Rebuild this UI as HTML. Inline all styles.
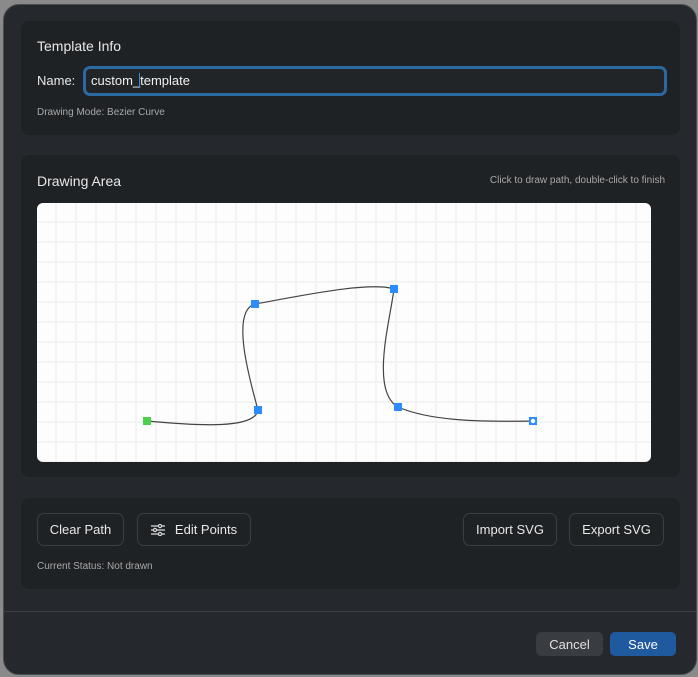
<!DOCTYPE html>
<html><head><style>
*{box-sizing:border-box;margin:0;padding:0}
body{width:698px;height:677px;background:#8a8a8a;font-family:"Liberation Sans",sans-serif;position:relative;overflow:hidden}
.dlg{position:absolute;left:3px;top:4px;width:694px;height:671px;background:#25292d;border-radius:16px;border:1px solid #4a4d50}
.panel{position:absolute;left:17px;width:659px;background:#1f2225;border-radius:8px}
.t{position:absolute;color:#e8e8e8;font-size:14px}
.s{position:absolute;color:#a8a8a8;font-size:10px}
.btn{position:absolute;top:15px;height:33px;border:1px solid #3b3e42;border-radius:7px;color:#e8e8e8;font-size:13px;display:flex;align-items:center;justify-content:center;white-space:nowrap}
</style></head><body>
<div class="dlg">
 <div class="panel" style="top:16px;height:114px">
  <div class="t" style="left:16px;top:17px;font-size:14px">Template Info</div>
  <div class="t" style="left:16px;top:52px;font-size:13px">Name:</div>
  <div style="position:absolute;left:62px;top:45px;width:584px;height:30px;border:3px solid #2a6aa0;border-radius:7px;background:#222528;color:#f0f0f0;font-size:13px;padding:4px 5px">custom_<span style="border-left:1px solid #3a8ee0;margin-left:-1px"></span>template</div>
  <div class="s" style="left:16px;top:86px">Drawing Mode: Bezier Curve</div>
 </div>
 <div class="panel" style="top:150px;height:322px">
  <div class="t" style="left:16px;top:18px;font-size:14px">Drawing Area</div>
  <div class="s" style="right:15px;top:20px">Click to draw path, double-click to finish</div>
  <svg style="position:absolute;left:16px;top:48px" width="614" height="259">
   <defs><pattern id="g" width="20" height="20" patternUnits="userSpaceOnUse" x="-2" y="-2"><rect width="20" height="20" fill="#fdfdfd"/><rect x="0" y="0" width="2" height="20" fill="#f3f3f3"/><rect x="0" y="0" width="20" height="2" fill="#f3f3f3"/></pattern></defs>
   <rect width="614" height="259" rx="6" fill="url(#g)"/>
   <g transform="translate(-37,-202)">
   <path d="M147,420 C200,425 255,428 258,409 C250,380 230,310 255,303 C300,295 370,280 394,288 C390,320 370,390 398,406 C430,420 480,421 533,420" fill="none" stroke="#444" stroke-width="1.2"/>
   <rect x="143" y="416" width="8" height="8" fill="#4cd04c"/>
   <rect x="251" y="299" width="8" height="8" fill="#2a8cff"/>
   <rect x="254" y="405" width="8" height="8" fill="#2a8cff"/>
   <rect x="390" y="284" width="8" height="8" fill="#2a8cff"/>
   <rect x="394" y="402" width="8" height="8" fill="#2a8cff"/>
   <rect x="529" y="416" width="8" height="8" fill="#2a8cff"/>
   <circle cx="533" cy="420" r="2.2" fill="#fff"/>
   </g>
  </svg>
 </div>
 <div class="panel" style="top:493px;height:91px">
  <div class="btn" style="left:16px;width:87px">Clear Path</div>
  <div class="btn" style="left:116px;width:114px"><svg width="14" height="12" style="margin-right:10px" stroke="#ddd" stroke-width="1.2" fill="none"><path d="M0 2h14M0 6h14M0 10h14"/><circle cx="9" cy="2" r="1.6" fill="#1f2225"/><circle cx="4" cy="6" r="1.6" fill="#1f2225"/><circle cx="9" cy="10" r="1.6" fill="#1f2225"/></svg>Edit Points</div>
  <div class="btn" style="left:442px;width:94px">Import SVG</div>
  <div class="btn" style="left:548px;width:95px">Export SVG</div>
  <div class="s" style="left:16px;top:63px">Current Status: Not drawn</div>
 </div>
 <div style="position:absolute;left:0;right:0;top:606px;border-top:1px solid #3c3f43"></div>
 <div style="position:absolute;left:532px;top:627px;width:67px;height:24px;background:#393c41;border-radius:5px;color:#e0e0e0;font-size:13px;display:flex;align-items:center;justify-content:center">Cancel</div>
 <div style="position:absolute;left:606px;top:627px;width:66px;height:24px;background:#1f5a9e;border-radius:5px;color:#fff;font-size:13px;display:flex;align-items:center;justify-content:center">Save</div>
</div>
</body></html>
